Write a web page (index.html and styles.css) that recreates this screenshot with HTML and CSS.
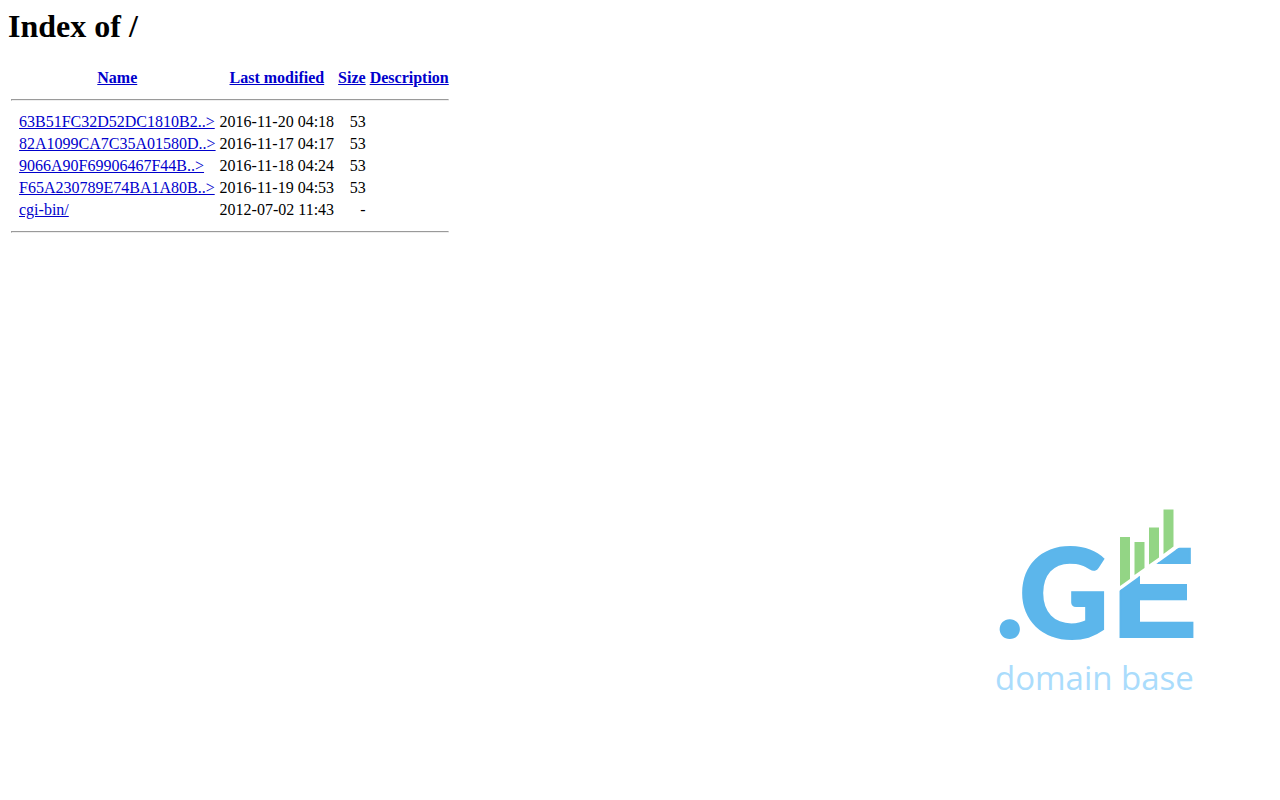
FILE: index.html
```html
<!DOCTYPE html>
<html lang="en">
<head>
  <meta charset="UTF-8">
  <meta name="viewport" content="width=device-width, initial-scale=1.0">
  <title>Index of /</title>
  <link rel="stylesheet" href="styles.css">
</head>
<body>

  <h1>Index of /</h1>
  <table class="listing">
    <thead>
      <tr><td>&nbsp;</td><th><a href="?C=N;O=D">Name</a></th><th><a href="?C=M;O=A">Last modified</a></th><th><a href="?C=S;O=A">Size</a></th><th><a href="?C=D;O=A">Description</a></th></tr>
      <tr><td colspan="5"><hr></td></tr>
    </thead>
    <tbody>
      <tr><td>&nbsp;</td><td><a href="#">63B51FC32D52DC1810B2..&gt;</a></td><td class="num">2016-11-20 04:18</td><td class="num">53</td><td></td></tr>
      <tr><td>&nbsp;</td><td><a href="#">82A1099CA7C35A01580D..&gt;</a></td><td class="num">2016-11-17 04:17</td><td class="num">53</td><td></td></tr>
      <tr><td>&nbsp;</td><td><a href="#">9066A90F69906467F44B..&gt;</a></td><td class="num">2016-11-18 04:24</td><td class="num">53</td><td></td></tr>
      <tr><td>&nbsp;</td><td><a href="#">F65A230789E74BA1A80B..&gt;</a></td><td class="num">2016-11-19 04:53</td><td class="num">53</td><td></td></tr>
      <tr><td>&nbsp;</td><td><a href="#">cgi-bin/</a></td><td class="num">2012-07-02 11:43</td><td class="num">-</td><td></td></tr>
      <tr><td colspan="5"><hr></td></tr>
    </tbody>
  </table>

  <svg class="logo" width="220" height="200" viewBox="0 0 220 200">
    <defs>
      <!-- keeps the part of the E below the slope -->
      <clipPath id="below-slope">
        <path d="M120 97.500L198 41H215V150H120Z"/>
      </clipPath>
    </defs>
    <text class="logo-main" x="5" y="138">.</text>
    <text class="logo-main logo-g" x="29" y="138">G</text>
    <text class="logo-main logo-e" x="122" y="137" clip-path="url(#below-slope)">E</text>
    <g class="logo-bars">
      <path d="M130 37H140V79L130 86Z"/>
      <path d="M144.500 42H154.500V68L144.500 75Z"/>
      <path d="M159 27.500H169V57.500L159 64.500Z"/>
      <path d="M173.500 9.500H183.500V46.500L173.500 54Z"/>
    </g>
    <text class="logo-sub" x="5" y="190">domain base</text>
  </svg>

</body>
</html>
```
FILE: styles.css
```css
body {
  display: flex;
  flex-direction: column;
  align-items: flex-start;
  box-sizing: border-box;
  min-height: 100vh;
  margin: 0;
  padding: 8px;
  font-family: "Liberation Serif", "Times New Roman", serif;
  font-size: 16px;
  background-color: #fff;
  color: #000;
}
h1 {
  margin: 0 0 21px;
  font-size: 32px;
}
a {
  color: #0000cc;
}
.listing td, .listing th {
  white-space: nowrap;
}
.num {
  text-align: right;
}
.logo {
  align-self: flex-end;
  margin: auto 62px 92px 0;
}
.logo-main {
  font-family: Lato, sans-serif;
  font-size: 124px;
  font-weight: 900;
  fill: #5cb6eb;
}
.logo-g, .logo-e {
  stroke: #5cb6eb;
  stroke-width: 2px;
}
.logo-e {
  font-family: "Liberation Sans", Arial, sans-serif;
  font-size: 128px;
}
.logo-bars {
  fill: #93d585;
}
.logo-sub {
  font-family: "Open Sans", sans-serif;
  font-size: 33px;
  fill: #aadcfc;
}
```
